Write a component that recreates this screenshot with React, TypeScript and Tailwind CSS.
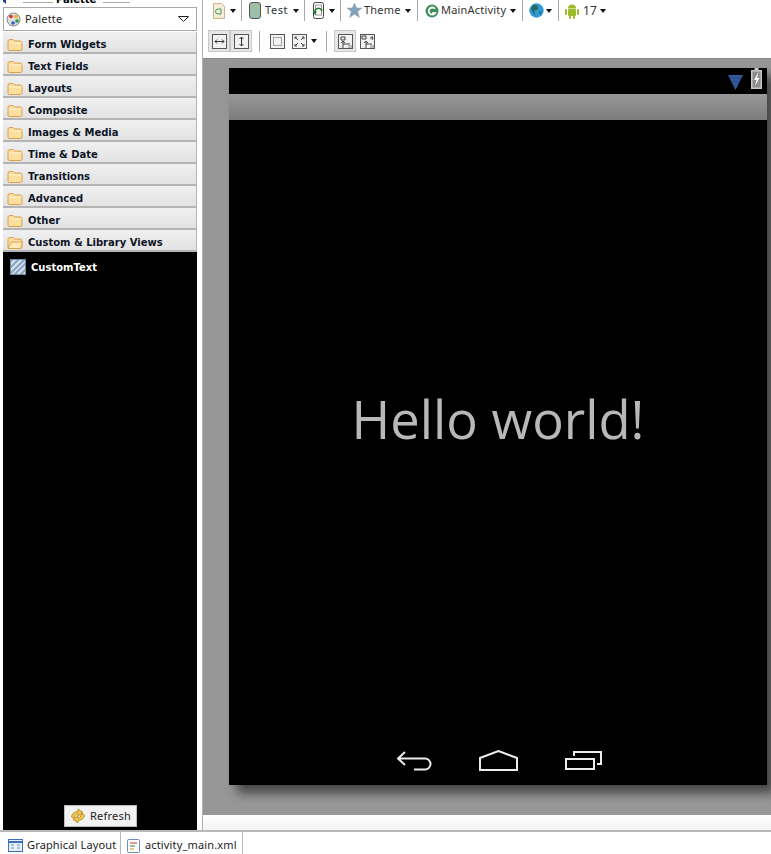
import React from 'react';

const categories = [
  'Form Widgets',
  'Text Fields',
  'Layouts',
  'Composite',
  'Images & Media',
  'Time & Date',
  'Transitions',
  'Advanced',
  'Other',
  'Custom & Library Views',
];

const Caret = () => (
  <svg width="6" height="4" viewBox="0 0 6 4" className="shrink-0">
    <path d="M0 0h6L3 4z" fill="#111" />
  </svg>
);

const Folder = ({ open }: { open?: boolean }) => (
  <svg width="16" height="13" viewBox="0 0 16 13" className="shrink-0">
    <path
      d="M1 3.500Q1 1.500 3 1.500h3l1.500 1.500H13q2 0 2 2v6q0 1.500-1.500 1.500h-11Q1 12.500 1 11z"
      fill="#fbdf9f"
      stroke="#dca04a"
    />
    {open ? <path d="M1 12.500 4 6h11.500l-2 6.500z" fill="#fde9b8" stroke="#dca04a" /> : <path d="M2 5h12.500" stroke="#fff3d2" />}
  </svg>
);

const Sep = () => <div className="w-px h-[21px] bg-[#a8a8a8] shrink-0" />;

const ToolIcon = ({ children, active }: { children: React.ReactNode; active?: boolean }) => (
  <div className={`w-[22px] h-[22px] flex items-center justify-center border ${active ? 'bg-[#e6e6e6] border-[#c8c8c8]' : 'border-transparent'}`}>
    {children}
  </div>
);

const Box = ({ children }: { children: React.ReactNode }) => (
  <svg width="15" height="15" viewBox="0 0 15 15">
    <rect x="0.500" y="0.500" width="14" height="14" fill="#f2f2f2" stroke="#555" />
    {children}
  </svg>
);

export default function App() {
  return (
    <div className="w-[771px] h-[854px] overflow-hidden bg-white flex flex-col font-['Noto_Sans',sans-serif]">
      <div className="flex h-[830px]">
        {/* Palette */}
        <div className="w-[203px] shrink-0 flex flex-col pl-[3px] pr-[5px] border-r border-[#b0b0b0]">
          <div className="h-[7px] relative overflow-hidden shrink-0">
            <div className="absolute left-[20px] top-[2px] w-[30px] h-px bg-[#aaa]" />
            <div className="absolute left-[53px] -top-[7px] text-[10px] leading-[14px] font-bold text-black font-['DejaVu_Sans',sans-serif]">Palette</div>
            <div className="absolute left-[100px] top-[2px] w-[27px] h-px bg-[#aaa]" />
            <div className="absolute -left-[3px] -top-[1px] w-[6px] h-[5px] bg-[#1c3f8f] [clip-path:polygon(100%_0,100%_100%,0_0)]" />
          </div>
          <div className="h-[24px] shrink-0 flex items-center border border-[#a8a8a8] bg-white pl-[2px] pr-[7px]">
            <svg width="15" height="15" viewBox="0 0 15 15" className="shrink-0">
              <circle cx="7.500" cy="7.500" r="6.500" fill="#ddd" stroke="#888" />
              <circle cx="5" cy="4.500" r="1.800" fill="#d33" />
              <circle cx="10" cy="4.500" r="1.800" fill="#e9b51e" />
              <circle cx="11" cy="9" r="1.800" fill="#2b9a3c" />
              <circle cx="7" cy="11" r="1.800" fill="#2b5fd0" />
            </svg>
            <span className="ml-[4px] text-[11px] text-[#222] flex-1 tracking-[0.2px]">Palette</span>
            <svg width="11" height="6" viewBox="0 0 11 6">
              <path d="M0.500 0.500h10L5.500 5.500z" fill="#fff" stroke="#222" />
            </svg>
          </div>
          <div className="pt-[1px] flex flex-col shrink-0">
            {categories.map((c, i) => (
              <div
                key={c}
                className="h-[22px] flex items-center pl-[4px] pt-[4px] gap-[5px] border-b-2 border-r border-[#b4b4b4] bg-gradient-to-b from-[#f0f0f0] to-[#e2e2e2]"
              >
                <Folder open={i === categories.length - 1} />
                <span className="text-[10px] font-bold text-[#0d1526] font-['DejaVu_Sans',sans-serif]">{c}</span>
              </div>
            ))}
          </div>
          <div className="flex-1 bg-black flex flex-col min-h-0">
            <div className="flex items-center pl-[7px] pt-[7px] gap-[5px]">
              <div className="w-[16px] h-[16px] border border-[#6d88a8] bg-[repeating-linear-gradient(135deg,#8fa8c4_0,#8fa8c4_2px,#d6e0ec_2px,#d6e0ec_4px)]" />
              <span className="text-[10px] font-bold text-white font-['DejaVu_Sans',sans-serif]">CustomText</span>
            </div>
            <div className="flex-1" />
            <div className="flex justify-center pb-[3px] pl-[1px]">
              <div className="w-[73px] h-[22px] bg-[#f2f2f2] border border-[#bbb] flex items-center justify-center gap-[4px]">
                <svg width="16" height="16" viewBox="0 0 16 16">
                  <path d="M1.500 9Q2 4 8 3.500V1l5 3.500L8 8V6Q5 6 4.500 11z" fill="#f2c544" stroke="#a87a18" strokeWidth="0.700" />
                  <path d="M14.500 7Q14 12 8 12.500V15l-5-3.500L8 8v2q3 0 3.500-5z" fill="#f2c544" stroke="#a87a18" strokeWidth="0.700" />
                </svg>
                <span className="text-[11px] text-[#222] tracking-[0.2px]">Refresh</span>
              </div>
            </div>
          </div>
        </div>

        {/* Editor */}
        <div className="flex-1 min-w-0 flex flex-col">
          <div className="h-[58px] shrink-0 bg-white pl-[5px] text-[11px] text-[#333] tracking-[0.2px]">
            <div className="h-[21px] flex items-center">
              <svg width="12" height="16" viewBox="0 0 12 16" className="ml-[5px]">
                <path d="M0.500 0.500h8l3 3v12h-11z" fill="#f5ecd8" stroke="#c9b48a" />
                <path d="M8 6H5a2.500 2.500 0 0 0 0 5h3z" fill="none" stroke="#3f9a5a" />
              </svg>
              <div className="ml-[5px]"><Caret /></div>
              <div className="ml-[5px]"><Sep /></div>
              <div className="w-[12px] h-[17px] rounded-[3px] bg-[#9dbfa8] border border-[#555] ml-[7px]" />
              <span className="ml-[4px] w-[23px] tracking-[0.6px] whitespace-nowrap">Test</span>
              <div className="ml-[5px]"><Caret /></div>
              <div className="ml-[5px]"><Sep /></div>
              <svg width="13" height="17" viewBox="0 0 13 17" className="ml-[7px]">
                <rect x="1.500" y="0.500" width="10" height="16" rx="2" fill="#fff" stroke="#444" />
                <rect x="3.500" y="3" width="6" height="10" fill="none" stroke="#999" />
                <path d="M3 11a3.500 3.500 0 0 1 7-2" fill="none" stroke="#1e7a2e" strokeWidth="1.500" />
                <path d="M1 9.500h4L3 13z" fill="#1e7a2e" />
              </svg>
              <div className="ml-[4px]"><Caret /></div>
              <div className="ml-[5px]"><Sep /></div>
              <svg width="15" height="15" viewBox="0 0 15 15" className="ml-[6px]">
                <path d="M7.500 0l2.200 5h5.300l-4.200 3.500 1.600 6-4.900-3.300-4.900 3.300 1.600-6L0 5h5.300z" fill="#7fa3bc" stroke="#a0a0a0" strokeWidth="0.500" />
              </svg>
              <span className="ml-[2px] w-[37px] whitespace-nowrap">Theme</span>
              <div className="ml-[4px]"><Caret /></div>
              <div className="ml-[6px]"><Sep /></div>
              <svg width="14" height="14" viewBox="0 0 14 14" className="ml-[7px]">
                <circle cx="7" cy="7" r="6.500" fill="#3f8f5a" />
                <path d="M10 4.800A3.500 3.500 0 1 0 10 9.200H7" fill="none" stroke="#fff" strokeWidth="1.800" />
              </svg>
              <span className="ml-[2px] w-[65px] whitespace-nowrap">MainActivity</span>
              <div className="ml-[4px]"><Caret /></div>
              <div className="ml-[6px]"><Sep /></div>
              <svg width="15" height="15" viewBox="0 0 15 15" className="ml-[6px]">
                <circle cx="7.500" cy="7.500" r="7.200" fill="#2f9ad8" />
                <path d="M4 2q4-1 5 2t-2 3-1 5-4-6zM10 9l3-1-2 4z" fill="#2c6a5a" />
              </svg>
              <div className="ml-[2px]"><Caret /></div>
              <div className="ml-[6px]"><Sep /></div>
              <svg width="16" height="16" viewBox="0 0 16 16" fill="#9dbb2a" className="ml-[5px]">
                <path d="M4 5.500a4 4 0 0 1 8 0z" />
                <rect x="4" y="6" width="8" height="7" rx="1" />
                <rect x="1" y="6" width="2" height="6" rx="1" />
                <rect x="13" y="6" width="2" height="6" rx="1" />
                <rect x="5" y="12" width="2" height="4" rx="1" />
                <rect x="9" y="12" width="2" height="4" rx="1" />
              </svg>
              <span className="ml-[3px] w-[13px] text-[12px] whitespace-nowrap">17</span>
              <div className="ml-[4px]"><Caret /></div>
            </div>
            <div className="h-[22px] mt-[9px] flex items-center">
              <ToolIcon active>
                <Box><path d="M3 7.500h9M3 7.500l2-2M3 7.500l2 2M12 7.500l-2-2M12 7.500l-2 2" stroke="#333" fill="none" /></Box>
              </ToolIcon>
              <ToolIcon active>
                <Box><path d="M7.500 3v9M7.500 3l-2 2M7.500 3l2 2M7.500 12l-2-2M7.500 12l2-2" stroke="#333" fill="none" /></Box>
              </ToolIcon>
              <div className="ml-[7px] mr-[10px]"><Sep /></div>
              <Box><rect x="3.500" y="3.500" width="8" height="8" fill="none" stroke="#555" strokeDasharray="1 1" /></Box>
              <div className="ml-[7px]">
                <Box><path d="M3 3l3 3M3 3h2M3 3v2M12 3L9 6M12 3h-2M12 3v2M3 12l3-3M3 12h2M3 12v-2M12 12L9 9M12 12h-2M12 12v-2" stroke="#444" fill="none" /></Box>
              </div>
              <div className="ml-[4px]"><Caret /></div>
              <div className="ml-[9px] mr-[7px]"><Sep /></div>
              <ToolIcon active>
                <Box><path d="M3 3h4v3H3zM5 14V7M3 9l2-2 2 2M5 10h7" stroke="#444" fill="none" /><rect x="10" y="11" width="4" height="3" fill="#bbb" /></Box>
              </ToolIcon>
              <ToolIcon>
                <Box><path d="M2 2h4v3H2zM6 14V7M4 9l2-2 2 2M6 10h6M10 4h3M12 2l1 2-1 2" stroke="#444" fill="none" /><rect x="10" y="11" width="4" height="3" fill="#bbb" /></Box>
              </ToolIcon>
            </div>
          </div>

          <div className="h-[757px] shrink-0 bg-[#979797] border-t border-[#8a8a8a] pl-[26px] pt-[9px] overflow-hidden">
            {/* Device */}
            <div className="w-[538px] h-[717px] bg-black flex flex-col shadow-[8px_8px_10px_rgba(0,0,0,0.55)]">
              <div className="h-[26px] shrink-0 flex items-start justify-end pr-[5px] gap-[7px]">
                <svg width="17" height="18" viewBox="0 0 17 18" className="mt-[5px] blur-[0.5px]">
                  <path d="M1 2h15L8.500 17z" fill="#34589c" />
                  <path d="M2.500 5h12M4 8.500h9" stroke="#2a4780" />
                </svg>
                <svg width="11" height="21" viewBox="0 0 11 21">
                  <path d="M3.500 0h4v2H11v19H0V2h3.500z" fill="#c8c8c8" />
                  <rect x="1.500" y="3.500" width="8" height="16" fill="#8c8c8c" />
                  <path d="M7.500 4 3 12h2.500L4 18l4.500-8H6z" fill="#fff" />
                </svg>
              </div>
              <div className="h-[26px] shrink-0 bg-gradient-to-b from-[#989898] to-[#7c7c7c]" />
              <div className="flex-1 flex items-center justify-center pb-[18px] font-['Open_Sans',sans-serif] text-[52.5px] text-[#b8b8b8]">
                Hello world!
              </div>
              <div className="h-[48px] shrink-0 relative flex items-center pl-[167px] gap-[47px] pb-[2px]">
                <svg width="36" height="21" viewBox="0 0 36 21" fill="none" stroke="#ececec" strokeWidth="2">
                  <path d="M9 2 2 8.500 9 15M2 8.500h27a5 5 0 0 1 0 11H18" />
                </svg>
                <svg width="39" height="21" viewBox="0 0 39 21" fill="none" stroke="#ececec" strokeWidth="2">
                  <path d="M1 8 19.500 1 38 8v12H1z" />
                </svg>
                <svg width="37" height="19" viewBox="0 0 37 19" fill="none" stroke="#ececec" strokeWidth="2">
                  <path d="M1 8h28v10H1zM9 5V1h27v12h-4" />
                </svg>
              </div>
            </div>
          </div>
          <div className="flex-1 bg-gradient-to-b from-white to-[#f4f4f4]" />
        </div>
      </div>

      {/* Bottom tabs */}
      <div className="flex-1 border-t-2 border-[#b8b8b8] flex text-[11px] text-[#222] tracking-[0.15px]">
        <div className="w-[120px] flex items-center pl-[8px] pt-[5px] gap-[4px]">
          <svg width="15" height="13" viewBox="0 0 15 13">
            <rect x="0.500" y="0.500" width="14" height="12" fill="#eaf1fb" stroke="#3a6fc0" />
            <path d="M1 3h13" stroke="#3a6fc0" strokeWidth="2" />
            <path d="M3 6h3M3 9h3M9 6h3M9 9h3" stroke="#6d8fc0" />
          </svg>
          <span>Graphical Layout</span>
        </div>
        <div className="w-[123px] flex items-center pl-[6px] pt-[5px] gap-[5px] border-x border-[#b8b8b8]">
          <svg width="13" height="14" viewBox="0 0 13 14">
            <rect x="0.500" y="0.500" width="12" height="13" rx="1" fill="#fff" stroke="#6d8fc0" />
            <path d="M3 4h7" stroke="#c0392b" />
            <path d="M3 7h5" stroke="#2b7a3c" />
            <path d="M3 10h4" stroke="#d68a1c" />
          </svg>
          <span>activity_main.xml</span>
        </div>
      </div>
    </div>
  );
}
